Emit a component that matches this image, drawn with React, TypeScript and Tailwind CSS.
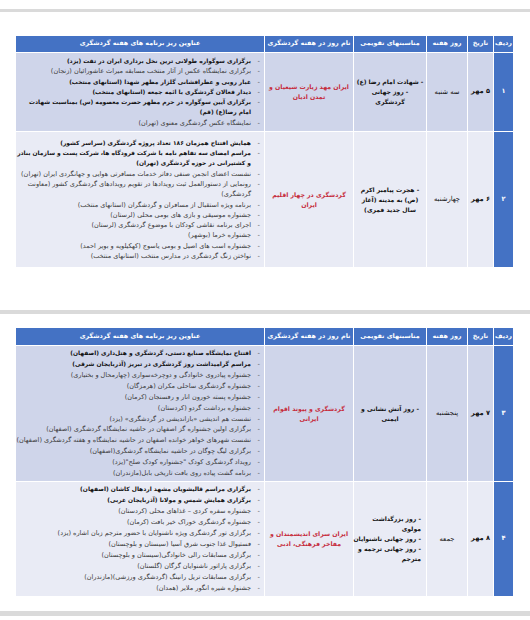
import React from "react";

type Item = { b?: boolean; lines: string[] };
type Row = {
  n: string;
  date: string;
  day: string;
  occ: string[];
  occRight?: boolean;
  name: string[];
  items: Item[];
  bg: string;
  h: string;
};

const rows1: Row[] = [
  {
    n: "۱",
    date: "۵ مهر",
    day: "سه شنبه",
    occ: ["- شهادت امام رضا (ع)", "- روز جهانی", "گردشگری"],
    name: ["ایران مهد زیارت شیعیان و", "تمدن ادیان"],
    bg: "bg-[#cfd5ea]",
    h: "h-[78px]",
    items: [
      { b: true, lines: ["برگزاری سوگواره طولانی ترین نخل برداری ایران در تفت (یزد)"] },
      { lines: ["برگزاری نمایشگاه عکس از آثار منتخب مسابقه میراث عاشورائیان (زنجان)"] },
      { b: true, lines: ["غبار روبی و عطرافشانی گلزار مطهر شهدا (استانهای منتخب)"] },
      { b: true, lines: ["دیدار فعالان گردشگری با ائمه جمعه (استانهای منتخب)"] },
      {
        b: true,
        lines: [
          "برگزاری آیین سوگواره در حرم مطهر حضرت معصومه (س) بمناسبت شهادت",
          "امام رضا(ع) (قم)",
        ],
      },
      { lines: ["نمایشگاه عکس گردشگری معنوی (تهران)"] },
    ],
  },
  {
    n: "۲",
    date: "۶ مهر",
    day: "چهارشنبه",
    occ: ["- هجرت پیامبر اکرم", "(ص) به مدینه (آغاز", "سال جدید قمری)"],
    name: ["گردشگری در چهار اقلیم", "ایران"],
    bg: "bg-[#e9ebf5]",
    h: "h-[135px]",
    items: [
      { b: true, lines: ["همایش افتتاح همزمان ۱۸۶ تعداد پروژه گردشگری (سراسر کشور)"] },
      {
        b: true,
        lines: [
          "مراسم امضای سه تفاهم نامه با شرکت فرودگاه ها، شرکت پست و سازمان بنادر",
          "و کشتیرانی در حوزه گردشگری (تهران)",
        ],
      },
      { lines: ["نشست اعضای انجمن صنفی دفاتر خدمات مسافرتی هوایی و جهانگردی ایران (تهران)"] },
      {
        lines: [
          "رونمایی از دستورالعمل ثبت رویدادها در تقویم رویدادهای گردشگری کشور (معاونت",
          "گردشگری)",
        ],
      },
      { lines: ["برنامه ویژه استقبال از مسافران و گردشگران (استانهای منتخب)"] },
      { lines: ["جشنواره موسیقی و بازی های بومی محلی (لرستان)"] },
      { lines: ["اجرای برنامه نقاشی کودکان با موضوع گردشگری (لرستان)"] },
      { lines: ["جشنواره خرما (بوشهر)"] },
      { lines: ["جشنواره اسب های اصیل و بومی یاسوج (کهکیلویه و بویر احمد)"] },
      { lines: ["نواختن زنگ گردشگری در مدارس منتخب (استانهای منتخب)"] },
    ],
  },
];

const rows2: Row[] = [
  {
    n: "۳",
    date: "۷ مهر",
    day: "پنجشنبه",
    occ: ["- روز آتش نشانی و", "ایمنی"],
    name: ["گردشگری و پیوند اقوام", "ایرانی"],
    bg: "bg-[#cfd5ea]",
    h: "h-[135px]",
    items: [
      { b: true, lines: ["افتتاح نمایشگاه صنایع دستی، گردشگری و هتل‌داری (اصفهان)"] },
      { b: true, lines: ["مراسم گرامیداشت روز گردشگری در تبریز  (آذربایجان شرقی)"] },
      { lines: ["جشنواره پیادروی خانوادگی و دوچرخه‌سواری (چهارمحال و بختیاری)"] },
      { lines: ["جشنواره گردشگری ساحلی مکران (هرمزگان)"] },
      { lines: ["جشنواره پسته خورون انار و رفسنجان (کرمان)"] },
      { lines: ["جشنواره برداشت گردو (کردستان)"] },
      { lines: ["نشست هم اندیشی «بازاندیشی در گردشگری» (یزد)"] },
      { lines: ["برگزاری اولین جشنواره گز اصفهان در حاشیه نمایشگاه گردشگری (اصفهان)"] },
      { lines: ["نشست شهرهای خواهر خوانده اصفهان در حاشیه نمایشگاه و هفته گردشگری (اصفهان)"] },
      { lines: ["برگزاری لیگ چوگان در حاشیه نمایشگاه گردشگری(اصفهان)"] },
      { lines: ["رویداد گردشگری کودک \"جشنواره کودک صلح\"(یزد)"] },
      { lines: ["برنامه گشت پیاده روی بافت تاریخی بابل(مازندران)"] },
    ],
  },
  {
    n: "۴",
    date: "۸ مهر",
    day: "جمعه",
    occ: ["- روز بزرگداشت", "مولوی", "- روز جهانی ناشنوایان", "- روز جهانی ترجمه و", "مترجم"],
    occRight: true,
    name: ["ایران سرای اندیشمندان و", "مفاخر فرهنگی، ادبی"],
    bg: "bg-[#e9ebf5]",
    h: "h-[114px]",
    items: [
      { b: true, lines: ["برگزاری مراسم قالیشویان مشهد اردهال کاشان (اصفهان)"] },
      { b: true, lines: ["برگزاری همایش شمس و مولانا (آذربایجان غربی)"] },
      { lines: ["جشنواره سفره کردی – غذاهای محلی (کردستان)"] },
      { lines: ["جشنواره گردشگری خوراک خیر بافت (کرمان)"] },
      { lines: ["برگزاری تور گردشگری ویژه ناشنوایان با حضور مترجم زبان اشاره (یزد)"] },
      { lines: ["فستیوال غذا جنوب شرق آسیا (سیستان و بلوچستان)"] },
      { lines: ["برگزاری مسابقات رالی خانوادگی(سیستان و بلوچستان)"] },
      { lines: ["برگزاری پاراتور ناشنوایان گرگان (گلستان)"] },
      { lines: ["برگزاری مسابقات تریل رانینگ (گردشگری ورزشی)(مازندران)"] },
      { lines: ["جشنواره شیره انگور ملایر (همدان)"] },
    ],
  },
];

function Table({ rows, headH, lh }: { rows: Row[]; headH: string; lh: string }) {
  const head = `${headH} flex items-center justify-center bg-[#4472c4] text-white font-bold text-[6.4px] whitespace-nowrap`;
  return (
    <div
      dir="rtl"
      className="ml-[16px] w-[497px] grid grid-cols-[19px_25px_40px_72px_88px_248px] gap-px bg-white"
    >
      <div className={head}>ردیف</div>
      <div className={head}>تاریخ</div>
      <div className={head}>روز هفته</div>
      <div className={head}>مناسبتهای تقویمی</div>
      <div className={`${head} text-[#f2d57a]`}>نام روز در هفته گردشگری</div>
      <div className={head}>عناوین ریز برنامه های هفته گردشگری</div>
      {rows.map((r) => (
        <React.Fragment key={r.n}>
          <div className={`${r.h} bg-[#4472c4] flex items-center justify-center text-white text-[6.6px] font-bold`}>
            {r.n}
          </div>
          <div className={`${r.h} ${r.bg} flex items-center justify-center text-[6.6px] font-bold text-[#111] whitespace-nowrap`}>
            {r.date}
          </div>
          <div className={`${r.h} ${r.bg} flex items-center justify-center text-[6.8px] text-[#111] whitespace-nowrap`}>
            {r.day}
          </div>
          <div
            className={`${r.h} ${r.bg} flex flex-col justify-center ${
              r.occRight ? "items-start pr-[5px]" : "items-center"
            } text-[6.1px] font-bold text-[#111] leading-[10px] whitespace-nowrap`}
          >
            {r.occ.map((o, i) => (
              <div key={i}>{o}</div>
            ))}
          </div>
          <div
            className={`${r.h} ${r.bg} flex flex-col items-center justify-center text-[6.2px] font-bold text-[#c62b3b] leading-[10px] whitespace-nowrap`}
          >
            {r.name.map((o, i) => (
              <div key={i}>{o}</div>
            ))}
          </div>
          <div className={`${r.h} ${r.bg} flex flex-col justify-center pr-[4px] overflow-hidden ${lh}`}>
            {r.items.map((it, i) => (
              <div key={i} className="flex">
                <div className="w-[9px] shrink-0 text-[#444] text-[6.6px]">-</div>
                <div className={it.b ? "font-bold text-[#111] text-[5.95px]" : "text-[#3c3c3c] text-[6.5px]"}>
                  {it.lines.map((l, j) => (
                    <div key={j} className="whitespace-nowrap">
                      {l}
                    </div>
                  ))}
                </div>
              </div>
            ))}
          </div>
        </React.Fragment>
      ))}
    </div>
  );
}

export default function App() {
  return (
    <div className="w-[530px] h-[620px] bg-white overflow-hidden [font-family:'DejaVu_Sans',sans-serif]">
      <div className="h-[9px]" />
      <div className="h-[3px] bg-[#dadada]" />
      <div className="h-[24px]" />
      <Table rows={rows1} headH="h-[16px]" lh="leading-[10.3px]" />
      <div className="h-[43px]" />
      <div className="h-[4px] bg-[#dadada]" />
      <div className="h-[14px]" />
      <Table rows={rows2} headH="h-[17px]" lh="leading-[10.9px]" />
      <div className="h-[15px]" />
      <div className="h-[5px] bg-[#dadada]" />
    </div>
  );
}
